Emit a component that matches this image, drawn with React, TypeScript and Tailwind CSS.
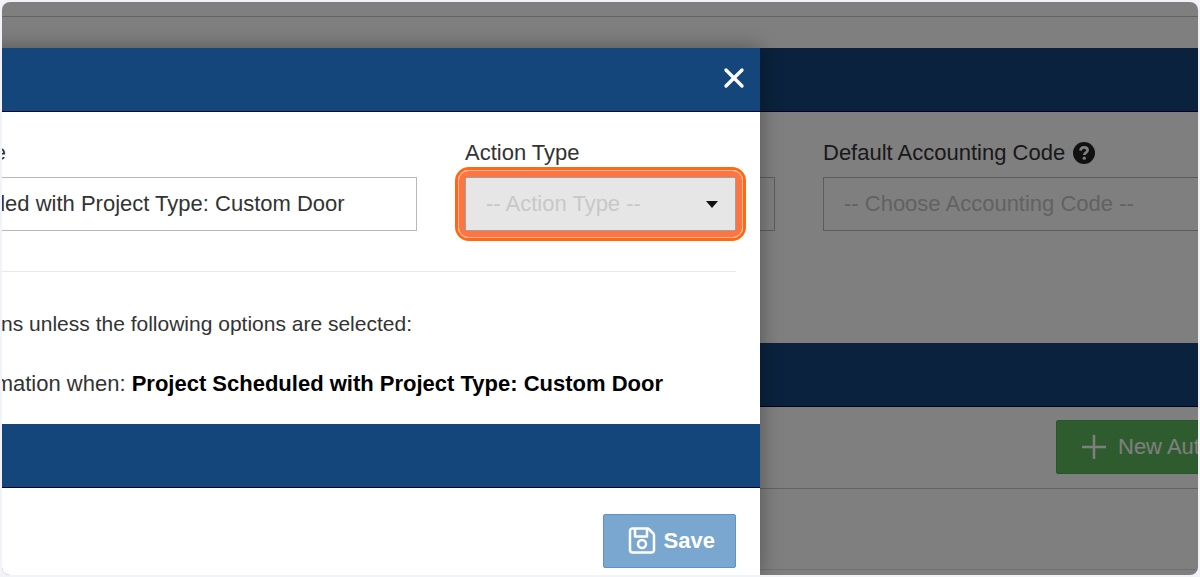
import React from 'react';
import { X } from 'lucide-react';

interface FieldProps {
  id: string;
  label: string;
  className?: string;
  children: React.ReactNode;
  help?: boolean;
}

const HelpIcon: React.FC = () => (
  <svg viewBox="0 0 22 22" className="h-[22px] w-[22px]" aria-hidden="true">
    <circle cx="11" cy="11" r="11" fill="#222" />
    <path
      d="M7.5 8.700c.2-2.200 1.600-3.400 3.600-3.400s3.500 1.200 3.500 2.900c0 2.500-3.300 2.500-3.300 4.900"
      fill="none"
      stroke="#fff"
      strokeWidth="2.700"
    />
    <circle cx="11.300" cy="16.200" r="1.600" fill="#fff" />
  </svg>
);

const SaveIcon: React.FC = () => (
  <svg
    viewBox="0 0 28 28"
    className="h-7 w-7"
    fill="none"
    stroke="currentColor"
    strokeWidth="2.500"
    strokeLinejoin="round"
    aria-hidden="true"
  >
    <path d="M4.500 1.500h14.500c1 0 1.700.3 2.300 1l4 4c.5.5.7 1.200.7 2v14.500a2.500 2.500 0 0 1-2.500 2.500h-19A2.500 2.500 0 0 1 2 23v-19A2.500 2.500 0 0 1 4.500 1.500Z" />
    <path d="M7 2v7.500h12v-7.500" />
    <circle cx="14" cy="17" r="4" />
  </svg>
);

const Field: React.FC<FieldProps> = ({ id, label, className = '', children, help = false }) => (
  <div className={`flex shrink-0 flex-col gap-2 ${className}`}>
    <div className="flex items-center gap-2">
      <label htmlFor={id} className="whitespace-nowrap leading-8">
        {label}
      </label>
      {help && <HelpIcon />}
    </div>
    {children}
  </div>
);

const SectionBar: React.FC<{ children?: React.ReactNode }> = ({ children }) => (
  <div className="mb-px flex h-16 items-center justify-end border-b border-[#050535] bg-[#14457b] px-4 pb-1">
    {children}
  </div>
);

const AutomationPage: React.FC = () => (
  <main className="grow bg-white">
    <div className="h-[15px] border-b border-[#c4c4c4]" />
    <div className="h-[31px]" />
    <SectionBar />
    <div className="flex h-[230px] gap-12 pt-6">
      <Field id="page-action" label="Action" className="w-[773px]">
        <select id="page-action" className="h-[54px] appearance-none border border-[#b8b8b8] px-5" />
      </Field>
      <Field id="accounting-code" label="Default Accounting Code" className="w-[420px]" help>
        <select
          id="accounting-code"
          className="h-[54px] appearance-none border border-[#b8b8b8] px-5 text-[#c4c4c4]"
        >
          <option>-- Choose Accounting Code --</option>
        </select>
      </Field>
    </div>
    <SectionBar />
    <div className="flex h-[81px] items-start justify-end overflow-hidden border-b border-[#c4c4c4] pt-3">
      <button
        type="button"
        className="-mr-24 flex h-[54px] w-[238px] items-center gap-3 rounded-xs border border-[#4cae4c] bg-[#5cb85c] px-[25px] whitespace-nowrap text-white"
      >
        <svg viewBox="0 0 24 24" className="h-6 w-6 shrink-0" aria-hidden="true">
          <path d="M12 0v24M0 12h24" stroke="currentColor" strokeWidth="2.500" />
        </svg>
        New Automation
      </button>
    </div>
    <div className="h-[81px] border-b border-[#e0e0e0]" />
  </main>
);

const AutomationDialog: React.FC = () => (
  <div
    role="dialog"
    aria-label="Automation"
    className="absolute top-[46px] bottom-0 -left-48 flex w-[950px] flex-col bg-white shadow-[0_0_20px_rgba(0,0,0,0.35)]"
  >
    <SectionBar>
      <button type="button" aria-label="Close" className="-mr-1.5 text-white">
        <X className="h-8 w-8" strokeWidth={2.500} />
      </button>
    </SectionBar>
    <div className="mr-6 ml-5 flex justify-between border-b border-[#e8e8e8] pt-6 pb-10">
      <Field id="automation-name" label="Automation Name" className="w-[587px]">
        <input
          id="automation-name"
          type="text"
          defaultValue="Project Scheduled with Project Type: Custom Door"
          className="h-[54px] border border-[#b8b8b8] px-5"
        />
      </Field>
      <Field id="action-type" label="Action Type" className="w-[271px]">
        <div className="relative">
          <select
            id="action-type"
            className="h-[54px] w-full appearance-none border border-[#a0a0a0] bg-[#e6e6e6] px-5 text-[#c8c8c8]"
          >
            <option>-- Action Type --</option>
          </select>
          <svg viewBox="0 0 12 7" className="absolute top-6 right-[18px] h-[7px] w-3" aria-hidden="true">
            <path d="M0 0h12L6 7Z" fill="#111" />
          </svg>
          {/* Highlight rings around the required field */}
          <span className="pointer-events-none absolute -inset-[10px] rounded-[14px] border-[3px] border-[#ff6914]" />
          <span className="pointer-events-none absolute -inset-[7px] rounded-[10px] border border-[#ffb595]" />
          <span className="pointer-events-none absolute -inset-[6px] rounded-[9px] border-[6px] border-[#ff7443]" />
        </div>
      </Field>
    </div>
    <div className="flex flex-col items-start pt-9 pb-6">
      <p className="w-[602px] text-right text-[21px] leading-8 whitespace-nowrap">
        actions unless the following options are selected:
      </p>
      <p className="mt-7 w-[853px] text-right leading-8 whitespace-nowrap">
        automation when: <strong className="text-black">Project Scheduled with Project Type: Custom Door</strong>
      </p>
    </div>
    <SectionBar />
    <div className="flex justify-end px-6 pt-[25px]">
      <button
        type="button"
        className="flex h-[54px] items-center gap-2 rounded-xs border border-[#5f93c4] bg-[#7aa7d0] pr-5 pl-6 font-bold text-white"
      >
        <SaveIcon />
        Save
      </button>
    </div>
  </div>
);

const App: React.FC = () => (
  <div className="min-h-screen bg-[#f2f2f9] p-[2px] font-['Liberation_Sans',Arial,sans-serif] text-[22px] leading-8 text-[#333]">
    <div className="relative flex min-h-[calc(100vh-4px)] flex-col overflow-hidden rounded-lg">
      <AutomationPage />
      <div className="absolute inset-0 bg-black/50" />
      <AutomationDialog />
    </div>
  </div>
);

export default App;
